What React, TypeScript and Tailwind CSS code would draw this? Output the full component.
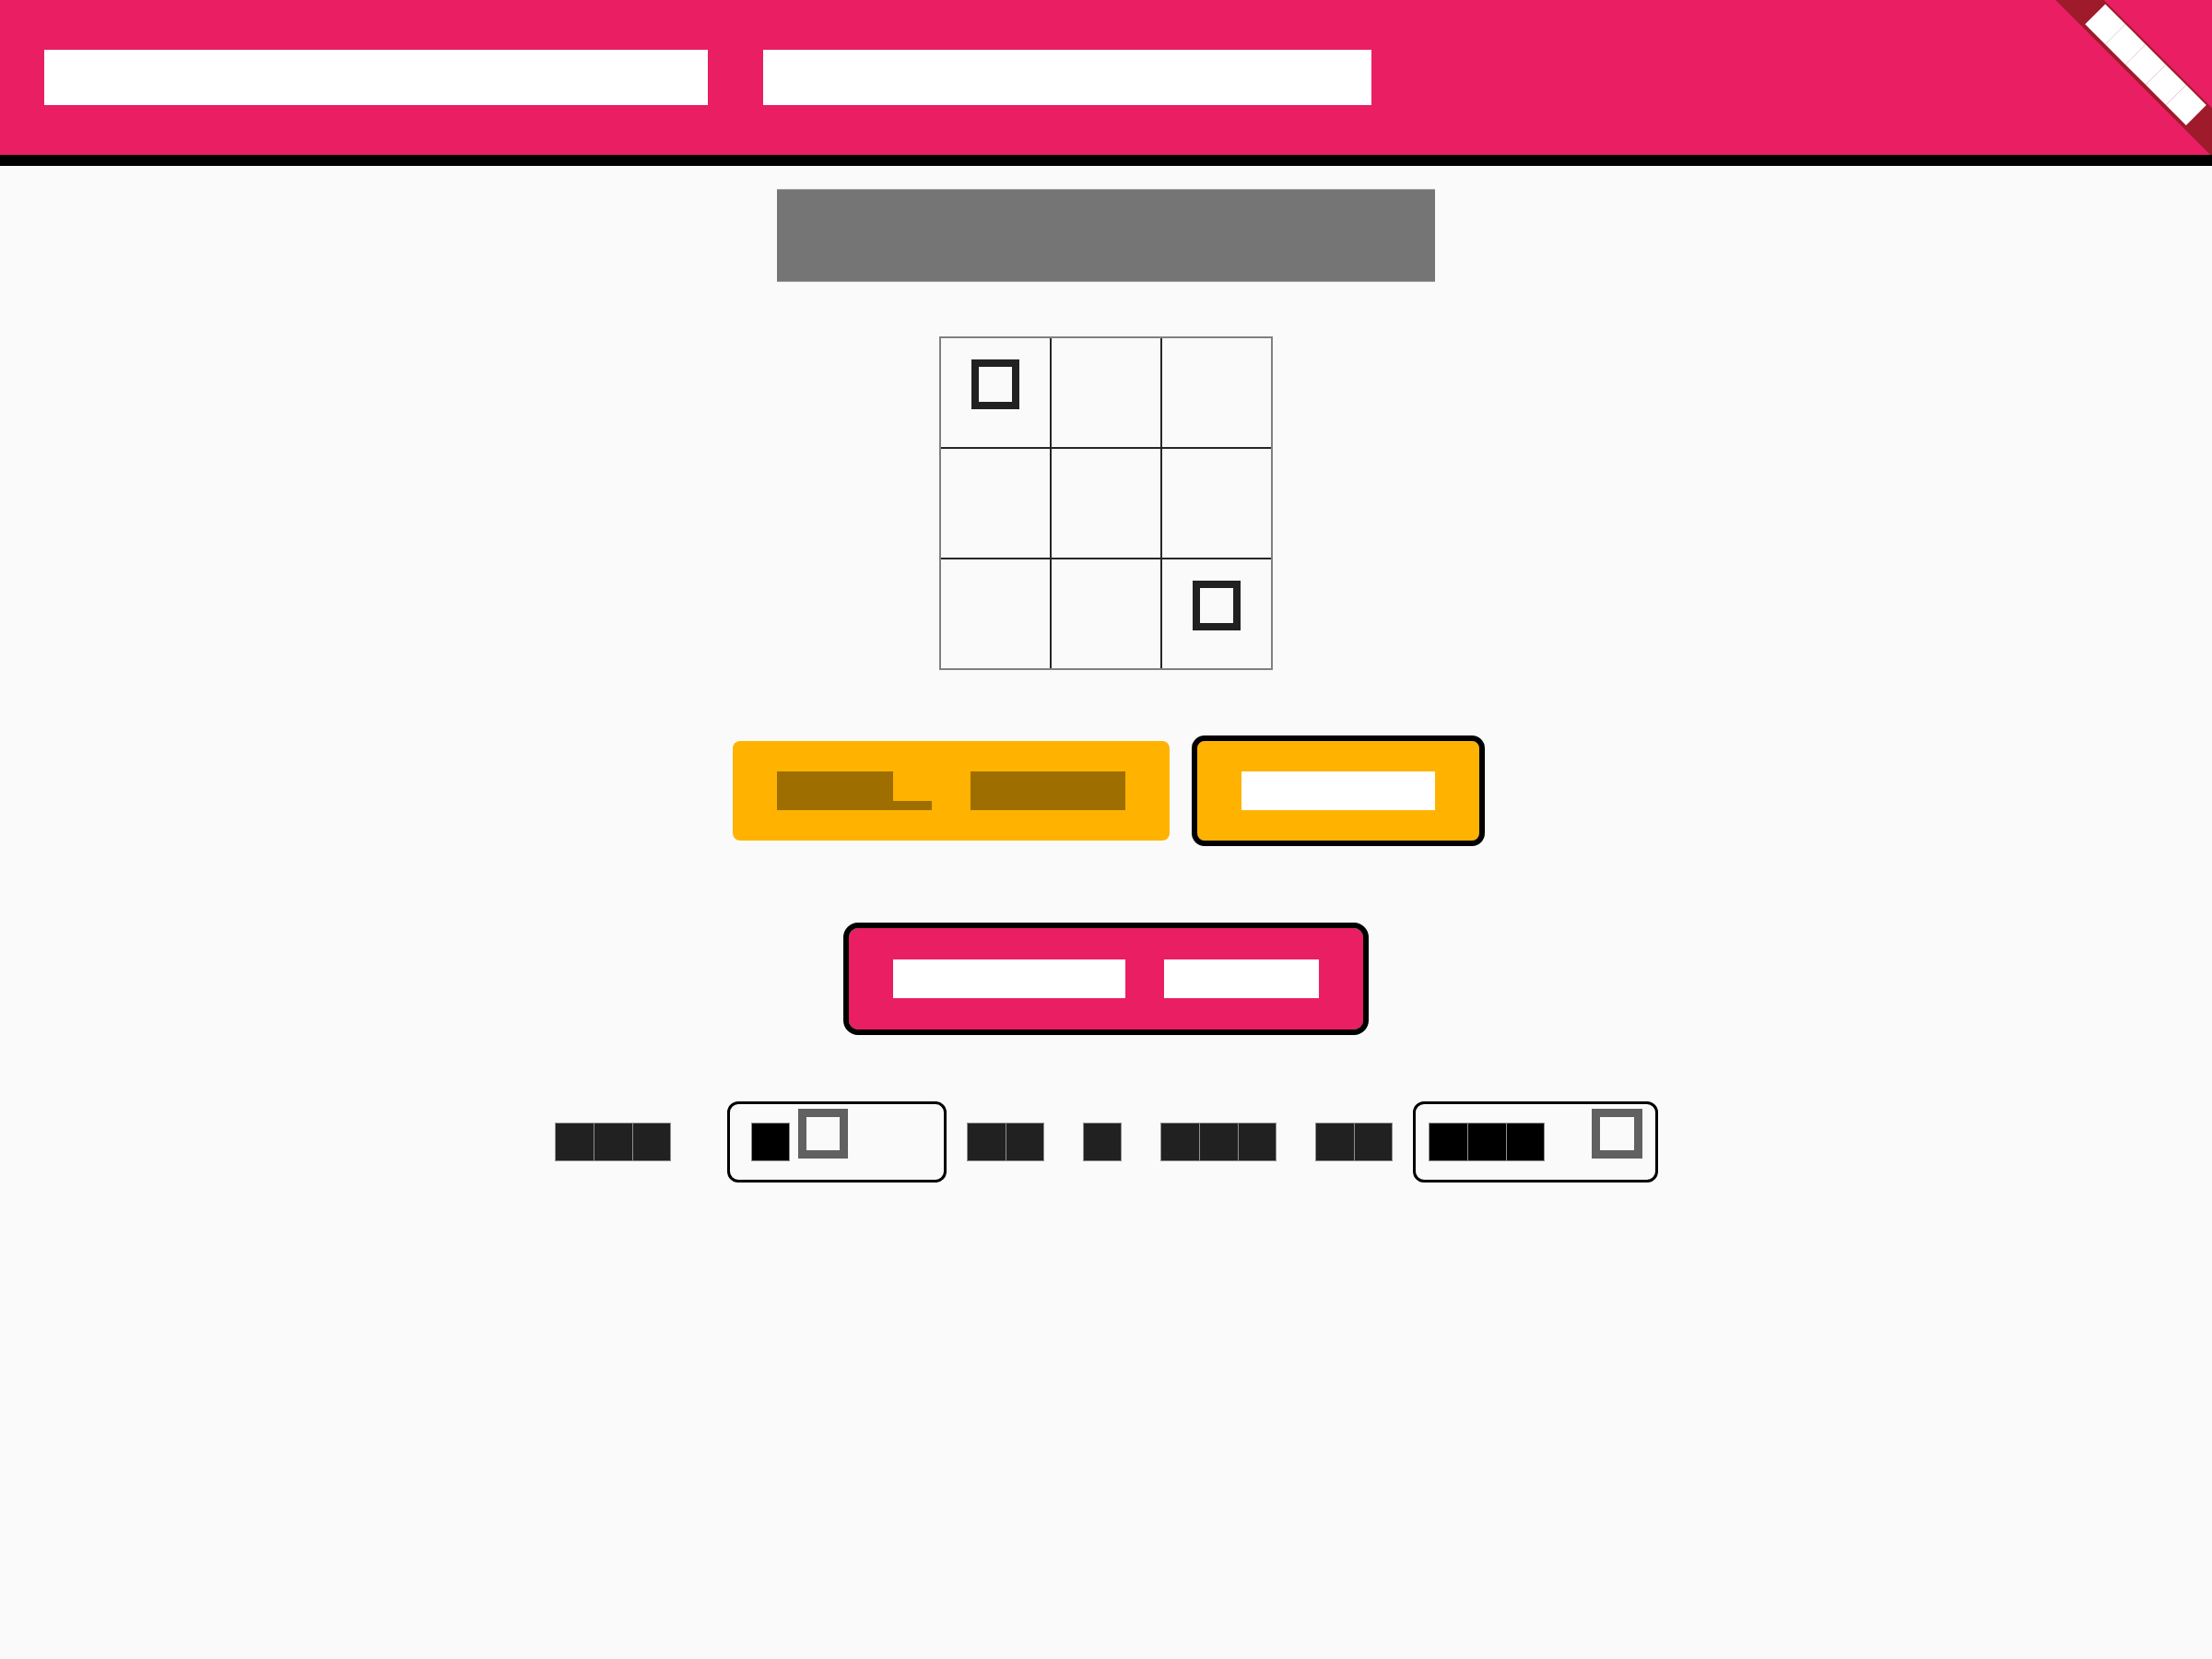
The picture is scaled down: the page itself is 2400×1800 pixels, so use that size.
import React from 'react';

type GlyphProps = {
  text: string;
  box: string;
  fill: string;
  seam?: boolean;
};

// each character is drawn as a solid em box, the text itself stays in the DOM
const Glyphs = ({ text, box, fill, seam = false }: GlyphProps) => {
  const words = text.split(' ');
  return (
    <span className="flex items-stretch">
      {words.map((word, wi) => (
        <React.Fragment key={wi}>
          {wi > 0 && <span className={box} />}
          <span className="flex">
            {Array.from(word).map((ch, ci) =>
              ch === 'p' ? (
                <span key={ci} className={`${box} flex items-end`}>
                  <span className={`w-full h-1/4 overflow-hidden text-[8px] leading-none ${fill}`}>p</span>
                </span>
              ) : (
                <span
                  key={ci}
                  className={`${box} ${fill} ${seam ? 'border-y border-l last:border-r border-[#8f8f8f]' : ''} flex items-center justify-center overflow-hidden text-[20px] leading-none`}
                >
                  {ch}
                </span>
              )
            )}
          </span>
        </React.Fragment>
      ))}
    </span>
  );
};

const Tofu = ({ char, className }: { char: string; className: string }) => (
  <span className={`flex items-center justify-center overflow-hidden text-[16px] leading-none text-[#fafafa] ${className}`}>
    {char}
  </span>
);

const App = () => {
  const cells = [
    { mark: '✕', cls: 'border-r-2 border-b-2 w-[120px] h-[120px]' },
    { mark: '', cls: 'border-r-2 border-b-2 w-[120px] h-[120px]' },
    { mark: '', cls: 'border-b-2 w-[118px] h-[120px]' },
    { mark: '', cls: 'border-r-2 border-b-2 w-[120px] h-[120px]' },
    { mark: '', cls: 'border-r-2 border-b-2 w-[120px] h-[120px]' },
    { mark: '', cls: 'border-b-2 w-[118px] h-[120px]' },
    { mark: '', cls: 'border-r-2 w-[120px] h-[118px]' },
    { mark: '', cls: 'border-r-2 w-[120px] h-[118px]' },
    { mark: '◯', cls: 'w-[118px] h-[118px]' },
  ];

  return (
    <div className="min-h-screen bg-[#fafafa] font-['Liberation_Sans',sans-serif]">
      <header className="relative overflow-hidden h-[180px] bg-[#e91e63] border-b-[12px] border-black flex items-center pl-12">
        <Glyphs text="Peer-to-Peer Tic-Tac-Toe" box="w-[60px] h-[60px]" fill="bg-white text-white" />
        <a
          href="#"
          className="absolute top-[52px] -right-[77px] w-[300px] h-[37px] rotate-45 bg-[#9f1a2b] flex items-center justify-center pb-[2px]"
        >
          <Glyphs text="About" box="w-[31px] h-[31px]" fill="bg-white text-white" />
        </a>
      </header>

      <main className="flex flex-col items-center">
        <h2 className="mt-[25px] border-y border-[#a3a3a3]">
          <Glyphs text="Playing" box="w-[102px] h-[99px]" fill="bg-[#757575] text-[#757575]" />
        </h2>

        <div className="mt-[59px] grid grid-cols-[120px_120px_118px] border-2 border-[#808080]">
          {cells.map((cell, i) => (
            <button key={i} className={`${cell.cls} border-[#262626] flex justify-center items-start pt-[23px]`}>
              {cell.mark && <Tofu char={cell.mark} className="w-[52px] h-[54px] border-[8px] border-[#212121]" />}
            </button>
          ))}
        </div>

        <div className="mt-[77px] flex items-center gap-[30px]">
          <button className="w-[474px] h-[108px] rounded-[8px] bg-[#ffb300] flex items-center justify-center">
            <Glyphs text="Step back" box="w-[42px] h-[42px]" fill="bg-[#9e6f00] text-[#9e6f00]" />
          </button>
          <button className="w-[306px] h-[108px] rounded-[8px] bg-[#ffb300] outline-solid outline-[6px] outline-black flex items-center justify-center">
            <Glyphs text="Reset" box="w-[42px] h-[42px]" fill="bg-white text-white" />
          </button>
        </div>

        <button className="mt-[95px] w-[558px] h-[110px] rounded-[10px] bg-[#e91e63] outline-solid outline-[6px] outline-black flex items-center justify-center">
          <Glyphs text="Create room" box="w-[42px] h-[42px]" fill="bg-white text-white" />
        </button>

        <div className="mt-[78px] flex items-center">
          <Glyphs text="Let" box="w-[42px] h-[42px]" fill="bg-[#212121] text-[#212121]" seam />
          <div className="ml-[61px] w-[238px] h-[88px] rounded-[12px] border-[3px] border-black flex items-center pl-[23px] gap-[9px]">
            <Glyphs text="O" box="w-[42px] h-[42px]" fill="bg-black text-black" seam />
            <Tofu char="▾" className="mb-[18px] w-[54px] h-[54px] border-[9px] border-[#616161]" />
          </div>
          <div className="ml-[22px]">
            <Glyphs text="be a bot at" box="w-[42px] h-[42px]" fill="bg-[#212121] text-[#212121]" seam />
          </div>
          <div className="ml-[22px] w-[266px] h-[88px] rounded-[12px] border-[3px] border-black flex items-center justify-between px-[14px]">
            <Glyphs text="Max" box="w-[42px] h-[42px]" fill="bg-black text-black" seam />
            <Tofu char="▾" className="mb-[18px] w-[55px] h-[54px] border-[9px] border-[#616161]" />
          </div>
        </div>
      </main>
    </div>
  );
};

export default App;
